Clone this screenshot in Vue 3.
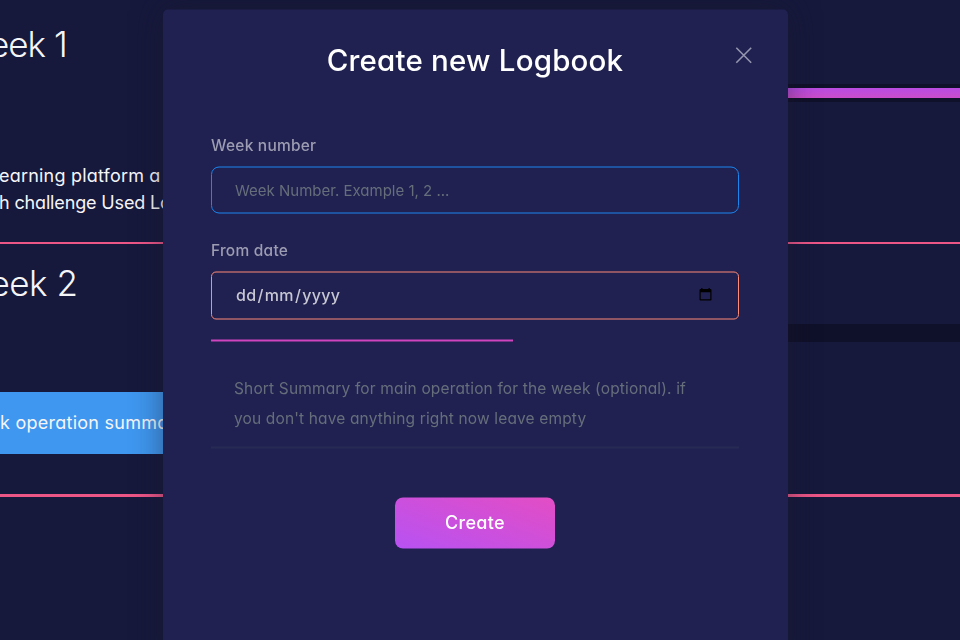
<script setup>
const weeks = [
  { id: 1, title: 'Week 1', lines: ['earning platform a', 'h challenge Used Lo'], filled: true },
  { id: 2, title: 'Week 2', action: 'k operation summa', filled: false },
]
</script>

<template>
  <div class="page">
    <main class="weeks">
      <section v-for="w in weeks" :key="w.id" class="week" :class="'week-' + w.id">
        <div class="info">
          <h2>{{ w.title }}</h2>
          <div v-if="w.lines" class="desc">
            <p v-for="l in w.lines" :key="l">{{ l }}</p>
          </div>
          <div v-else class="action"><span>{{ w.action }}</span></div>
        </div>
        <div class="track"><div v-if="w.filled" class="fill"></div></div>
      </section>
    </main>

    <div class="modal" role="dialog">
      <header>
        <h1>Create new Logbook</h1>
        <button class="close" aria-label="Close">
          <svg width="18" height="18" viewBox="0 0 18 18"><path d="M1.3 1.3 16.2 16.2M16.2 1.3 1.3 16.2" /></svg>
        </button>
      </header>
      <form>
        <label class="l1"><span>Week number</span></label>
        <div class="field number"><span>Week Number. Example 1, 2 ...</span></div>
        <label class="l2"><span>From date</span></label>
        <div class="field date">
          <span class="date-text"><span>dd</span><i>/</i><span>mm</span><i>/</i><span>yyyy</span></span>
          <svg width="13" height="14" viewBox="0 0 13 14"><path fill-rule="evenodd" d="M2.2.5h1.3v1h6V.5h1.3v1h.7q1 0 1 1v9.4q0 1-1 1h-10q-1 0-1-1V2.500q0-1 1-1h.7zM1.700 4.700v7.100h9.600V4.700z" /></svg>
        </div>
        <div class="progress"></div>
        <div class="summary">
          <p class="s1">Short Summary for main operation for the week (optional). if</p>
          <p class="s2">you don't have anything right now leave empty</p>
        </div>
        <button type="button" class="create"><span>Create</span></button>
      </form>
    </div>
  </div>
</template>

<style>
body { background: #16183c; }
</style>

<style scoped>
* { box-sizing: border-box; }
h1, h2, p { margin: 0; font-weight: inherit; }
.page {
  position: relative;
  width: 960px;
  height: 640px;
  overflow: hidden;
  background: #16183c;
  color: #f5f5f8;
  font-family: Inter, "Open Sans", sans-serif;
  font-feature-settings: "cv11";
  white-space: nowrap;
}
button { font: inherit; font-feature-settings: inherit; border: 0; background: none; padding: 0; }
.weeks { display: flex; flex-direction: column; }
.week { display: grid; grid-template-columns: 163px 1fr; }
.week-1 { height: 244px; border-bottom: 2px solid #ec5687; padding-top: 4px; }
.week-2 { height: 253px; border-bottom: 3px solid #ec5687; }
.info { overflow: hidden; }
h2 { font-size: 35px; font-weight: 300; line-height: 50px; margin: 15px 0 0 -42px; letter-spacing: -1px; }
.week-2 h2 { margin-top: 14px; letter-spacing: -0.5px; }
.desc { margin-top: 93px; font-size: 18px; line-height: 27px; letter-spacing: 0.2px; }
.desc p { margin-left: -1px; }
.desc p + p { letter-spacing: -0.15px; }
.action { margin-top: 84px; height: 62px; line-height: 62px; background: #3f97ef; font-size: 18px; letter-spacing: 0.25px; }
.track { margin-top: 80px; margin-left: 500px; height: 18px; padding: 4px 0; background: #0f1029; }
.fill { height: 10px; background: linear-gradient(#b94ce3, #cb4dcb); }

.modal {
  position: absolute;
  left: 163px;
  top: 10px;
  width: 625px;
  height: 660px;
  padding: 0 49px 0 48px;
  border-radius: 5px;
  background: #202150;
  box-shadow: 0 0 30px rgba(27, 28, 46, .5);
  transform: translateY(-.5px);
  will-change: transform;
}
header { height: 126px; display: flex; justify-content: center; position: relative; padding-top: 25px; }
h1 { font-size: 29.5px; line-height: 50px; font-weight: 450; color: #fff; letter-spacing: 0.2px; }
.close { position: absolute; top: 37px; right: -14px; width: 18px; height: 18px; }
.close svg { display: block; fill: none; stroke: #9495ae; stroke-width: 1.6; }
form { display: flex; flex-direction: column; }
label { height: 20px; line-height: 20px; font-size: 15.5px; font-weight: 500; color: #9c9cb2; letter-spacing: 0.22px; }
.field { display: flex; align-items: center; padding: 0 23px; }
.number { height: 47px; margin-top: 11px; border: 1px solid #1b86ef; border-radius: 8px; color: #666e7b; font-size: 15px; }
.l2 { margin-top: 27px; }
.date { height: 48px; margin-top: 11px; border: 1px solid #ff8a75; border-radius: 5px; color: #c8c8d4; font-size: 16px; font-weight: 500; justify-content: space-between; padding: 0 26px 0 24px; }
.date-text { display: flex; letter-spacing: 0.35px; padding-bottom: 2px; }
.date-text i { font-style: normal; padding: 0 1px; }
.date svg { fill: #000; margin-bottom: 2px; }
.progress { width: 302px; height: 2px; margin-top: 20px; background: #d044bd; }
.summary { height: 107px; padding: 32px 23px 0; border-bottom: 2px solid #272b54; color: #666e7b; font-size: 15.5px; line-height: 30px; letter-spacing: 0.15px; }
.create { width: 160px; height: 51px; margin: 49px auto 0 184px; border-radius: 8px; background: linear-gradient(20deg, #b752f3, #e34dc4); color: #fff; font-size: 18px; font-weight: 500; letter-spacing: 0.3px; padding-bottom: 2px; }
</style>
